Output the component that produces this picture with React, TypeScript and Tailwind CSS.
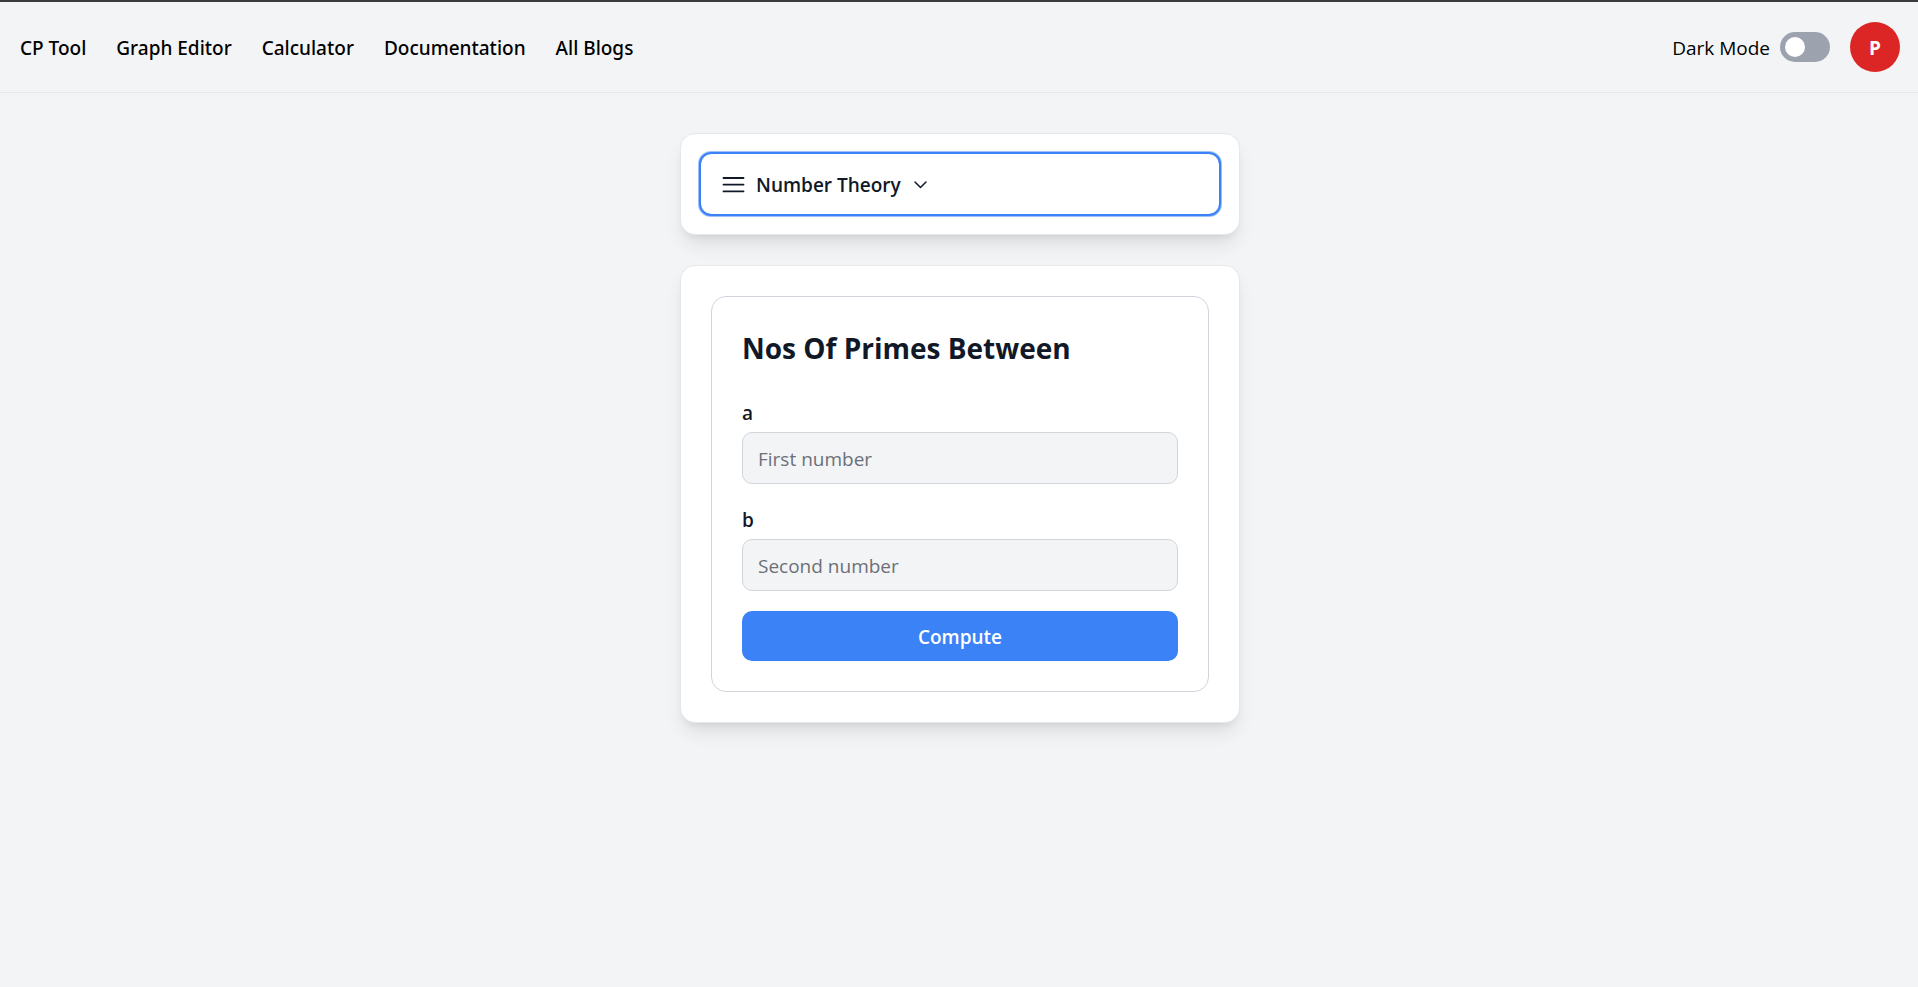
import { useState } from "react";

const navItems = ["CP Tool", "Graph Editor", "Calculator", "Documentation", "All Blogs"];

function Header() {
  const [dark, setDark] = useState(false);
  return (
    <header className="flex h-[93px] items-center justify-between border-t-2 border-b border-t-[#3c3c3c] border-b-gray-200 pr-[18px] pl-5">
      <nav className="flex items-center gap-[30px] pt-0.5 font-['Noto_Sans',sans-serif] font-medium">
        {navItems.map((item) => (
          <a key={item} href="#" className="text-black">
            {item}
          </a>
        ))}
      </nav>
      <div className="flex items-center gap-5">
        <label className="flex items-center gap-2.5 text-black">
          <span className="pt-0.5">Dark Mode</span>
          <input
            type="checkbox"
            role="switch"
            checked={dark}
            onChange={(e) => setDark(e.target.checked)}
            className="h-[30px] w-[50px] appearance-none rounded-full bg-[#9ca3af] p-[5px] before:block before:size-5 before:rounded-full before:bg-white checked:bg-blue-500 checked:before:ml-5"
          />
        </label>
        <button className="size-[50px] rounded-full bg-[#dc2626] pt-0.5 font-bold text-white">P</button>
      </div>
    </header>
  );
}

function CategoryMenu() {
  return (
    <section className="rounded-[15px] border border-gray-200 bg-white p-5 shadow-[0_12px_19px_-4px_rgba(0,0,0,0.1),0_5px_8px_-5px_rgba(0,0,0,0.1)]">
      <button className="flex h-[60px] w-full items-center rounded-[10px] px-5 font-semibold shadow-[0_0_0_2px_#3b82f6,0_0_0_3px_#3b82f680]">
        <svg className="mr-2.5 size-[25px]" viewBox="0 0 25 25" stroke="currentColor" strokeWidth="1.8" strokeLinecap="round" fill="none">
          <path d="M2.5 6h20M2.5 12.7h20M2.5 19.4h20" />
        </svg>
        <span className="pt-0.5">Number Theory</span>
        <svg className="ml-2.5 size-5" viewBox="0 0 20 20" stroke="currentColor" strokeWidth="1.5" strokeLinecap="round" strokeLinejoin="round" fill="none">
          <path d="M4 8l5.5 5.5 5.5-5.5" />
        </svg>
      </button>
    </section>
  );
}

function Field({ name, placeholder }: { name: string; placeholder: string }) {
  return (
    <div className="mb-5 flex flex-col">
      <label htmlFor={name} className="pt-px pb-1 font-semibold">
        {name}
      </label>
      <input
        id={name}
        placeholder={placeholder}
        className="h-[52px] w-full rounded-[10px] border border-gray-300 bg-gray-100 px-[15px] pt-0.5 placeholder:text-[#6b7078]"
      />
    </div>
  );
}

export default function App() {
  return (
    <div className="min-h-screen bg-[#f3f4f6] font-['Open_Sans','Noto_Sans',sans-serif] text-[19px] leading-[30px] text-[#111827]">
      <Header />
      <main className="mx-auto flex max-w-[562px] flex-col gap-[30px] pt-10 pl-0.5">
        <CategoryMenu />
        <section className="rounded-[15px] border border-gray-200 bg-white p-[30px] shadow-[0_12px_19px_-4px_rgba(0,0,0,0.1),0_5px_8px_-5px_rgba(0,0,0,0.1)]">
          <form className="rounded-[15px] border border-gray-300 p-[30px]" onSubmit={(e) => e.preventDefault()}>
            <h1 className="mb-[29px] pt-px text-[28px] leading-[40px] font-bold">Nos Of Primes Between</h1>
            <Field name="a" placeholder="First number" />
            <Field name="b" placeholder="Second number" />
            <button className="h-[50px] w-full rounded-[10px] bg-[#3b82f6] pt-0.5 font-semibold text-white">Compute</button>
          </form>
        </section>
      </main>
    </div>
  );
}
